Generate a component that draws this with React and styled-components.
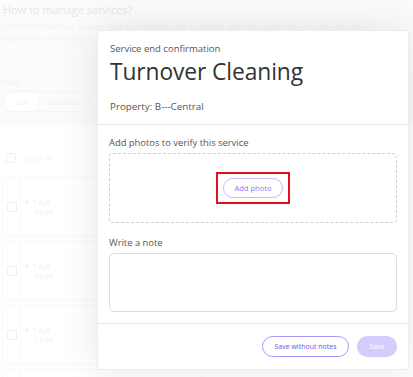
import styled, { createGlobalStyle } from 'styled-components';

const GlobalStyle = createGlobalStyle`
  html, body {
    margin: 0;
    padding: 0;
    background: #fff;
  }
  body {
    font-family: 'Open Sans', 'Noto Sans', Arial, sans-serif;
  }
`;

const Page = styled.div`
  position: relative;
  width: 413px;
  height: 377px;
  overflow: hidden;
  background: #fff;
`;

const Intro = styled.div`
  padding: 2px 3px 0 3px;
  height: 126px;
  box-sizing: border-box;
  background: #e8e8e8;
`;

const PageTitle = styled.h2`
  margin: 0;
  font-size: 11px;
  font-weight: 400;
  line-height: 16px;
  color: #777;
`;

const Paragraph = styled.p`
  margin: 3px 0 0 0;
  width: 360px;
  font-size: 7.6px;
  line-height: 11.5px;
  color: #bbb;
`;

const ViewLabel = styled.div`
  margin-top: 33px;
  font-size: 7.5px;
  line-height: 10px;
  color: #bbb;
`;

const Controls = styled.div`
  display: flex;
  align-items: center;
  gap: 8px;
  margin-top: 4px;
`;

const Segmented = styled.div`
  display: flex;
  height: 19px;
  border: 1px solid #cdcdcd;
  border-radius: 10px;
  overflow: hidden;
`;

const Segment = styled.div`
  display: flex;
  align-items: center;
  justify-content: center;
  width: ${(p) => p.w}px;
  font-size: 7.5px;
  color: #b4b4b4;
  border-right: ${(p) => (p.active ? '1px solid #cdcdcd' : 'none')};
  border-radius: ${(p) => (p.active ? '10px' : '0')};
  background: ${(p) => (p.active ? '#fff' : 'transparent')};
`;

const Pill = styled.div`
  width: 40px;
  height: 19px;
  border: 1px solid #cdcdcd;
  border-radius: 10px;
`;

const SelectRow = styled.div`
  display: flex;
  align-items: center;
  gap: 6px;
  padding: 26px 6px 0 6px;
  height: 12px;
  font-size: 7.5px;
  color: #c4c4c4;
`;

const Box = styled.span`
  display: inline-block;
  width: 8px;
  height: 8px;
  border: 1px solid #b4b4b4;
  border-radius: 1px;
  background: #fff;
`;

const RowPill = styled.div`
  margin-left: 46px;
  width: 20px;
  height: 14px;
  border: 1px solid #d4d4d4;
  border-radius: 8px;
`;

const CardList = styled.div`
  display: flex;
  flex-direction: column;
  gap: 5px;
  padding: 13px 0 0 2px;
`;

const Card = styled.div`
  display: flex;
  height: 59px;
  width: 200px;
  box-sizing: border-box;
  border: 1px solid #dadada;
  border-radius: 6px;
`;

const CardCheck = styled.div`
  display: flex;
  align-items: center;
  justify-content: center;
  width: 17px;
  border-right: 1px solid #dedede;
`;

const CardTime = styled.div`
  display: flex;
  align-items: flex-start;
  gap: 3px;
  padding: 19px 0 0 4px;
  font-size: 7.5px;
  line-height: 10px;
  color: #aaa;
`;

const Dot = styled.span`
  display: inline-block;
  width: 4px;
  height: 4px;
  margin-top: 3px;
  border-radius: 50%;
  background: #f8c400;
`;

const Backdrop = styled.div`
  position: absolute;
  inset: 0;
  background: rgba(255, 255, 255, 0.8);
`;

const Modal = styled.div`
  position: absolute;
  left: 97px;
  top: 30px;
  width: 312px;
  height: 340px;
  box-sizing: border-box;
  display: flex;
  flex-direction: column;
  background: #fff;
  border: 1px solid #ececec;
  border-radius: 4px;
  box-shadow: 0 0 40px rgba(0, 0, 0, 0.1);
`;

const Header = styled.div`
  padding: 11px 12px 10px 12px;
  border-bottom: 1px solid #e8e8e8;
`;

const Eyebrow = styled.div`
  font-size: 9.5px;
  line-height: 13px;
  color: #555;
`;

const Title = styled.h1`
  margin: 2px 0 0 0;
  font-size: 22.8px;
  font-weight: 400;
  line-height: 30px;
  letter-spacing: -0.1px;
  color: #333;
`;

const Property = styled.div`
  margin-top: 13px;
  font-size: 9.8px;
  line-height: 14px;
  color: #555;
`;

const Body = styled.div`
  padding: 11px;
  border-bottom: 1px solid #e8e8e8;
`;

const Label = styled.div`
  font-size: 9.4px;
  line-height: 14px;
  color: #555;
  margin-top: ${(p) => p.mt || 0}px;
`;

const DropZone = styled.div`
  display: flex;
  align-items: center;
  justify-content: center;
  margin-top: 3px;
  height: 70px;
  box-sizing: border-box;
  border: 1px dashed #cfcfcf;
  border-radius: 4px;
`;

const Highlight = styled.div`
  display: flex;
  padding: 4px 5px;
  border: 2px solid #e0101e;
`;

const OutlineButton = styled.button`
  display: flex;
  align-items: center;
  justify-content: center;
  width: ${(p) => p.w}px;
  height: ${(p) => p.h}px;
  padding: 0;
  border: 1px solid ${(p) => p.border};
  border-radius: 12px;
  background: #fff;
  font-family: 'Open Sans', Arial, sans-serif;
  font-size: ${(p) => p.fs}px;
  color: ${(p) => p.color};
`;

const NoteBox = styled.div`
  margin-top: 3px;
  height: 59px;
  box-sizing: border-box;
  border: 1px solid #dcdcdc;
  border-radius: 5px;
`;

const Footer = styled.div`
  display: flex;
  justify-content: flex-end;
  gap: 8px;
  padding: 12px 11px 0 11px;
`;

const SaveButton = styled.button`
  width: 40px;
  height: 21px;
  padding: 0;
  border: none;
  border-radius: 11px;
  background: #d4ccfc;
  color: #fff;
  font-family: 'Open Sans', Arial, sans-serif;
  font-size: 7px;
`;

const cards = [
  { date: '5 Apr', time: '09:00' },
  { date: '5 Apr', time: '09:00' },
  { date: '5 Apr', time: '11:00' },
  { date: '', time: '' },
];

export default function App() {
  return (
    <Page>
      <GlobalStyle />
      <Intro>
        <PageTitle>How to manage services?</PageTitle>
        <Paragraph>
          In the list of services, you can find the checklists and a minutes and alerts
          summary. You can add, edit (date/time, extras, etc) or cancel a service or
          create new services.
        </Paragraph>
        <ViewLabel>View</ViewLabel>
        <Controls>
          <Segmented>
            <Segment w={35} active>
              List
            </Segment>
            <Segment w={49}>Dispatch</Segment>
          </Segmented>
          <Pill />
        </Controls>
      </Intro>
      <SelectRow>
        <Box />
        Select all
        <RowPill />
      </SelectRow>
      <CardList>
        {cards.map((c, i) => (
          <Card key={i}>
            <CardCheck>
              <Box />
            </CardCheck>
            {c.date && (
              <CardTime>
                <Dot />
                <div>
                  {c.date}
                  <br />
                  &nbsp;{c.time}
                </div>
              </CardTime>
            )}
          </Card>
        ))}
      </CardList>

      <Backdrop />
      <Modal>
        <Header>
          <Eyebrow>Service end confirmation</Eyebrow>
          <Title>Turnover Cleaning</Title>
          <Property>Property: B---Central</Property>
        </Header>
        <Body>
          <Label>Add photos to verify this service</Label>
          <DropZone>
            <Highlight>
              <OutlineButton w={60} h={20} fs={7.6} border="#c3b9fb" color="#8a78f5">
                Add photo
              </OutlineButton>
            </Highlight>
          </DropZone>
          <Label mt={13}>Write a note</Label>
          <NoteBox />
        </Body>
        <Footer>
          <OutlineButton w={87} h={21} fs={7} border="#a896fb" color="#6b58de">
            Save without notes
          </OutlineButton>
          <SaveButton>Save</SaveButton>
        </Footer>
      </Modal>
    </Page>
  );
}
